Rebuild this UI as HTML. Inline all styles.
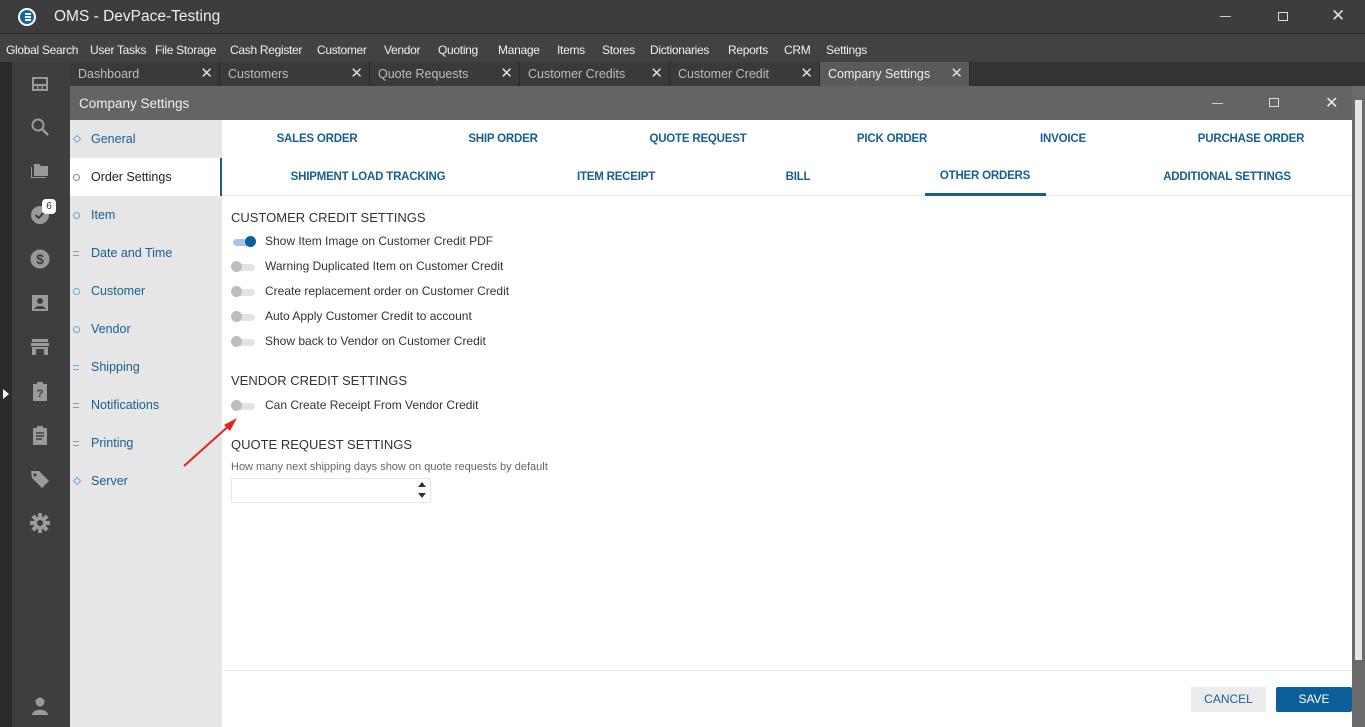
<!DOCTYPE html>
<html><head><style>
*{margin:0;padding:0;box-sizing:border-box}
body{width:1365px;height:727px;overflow:hidden;font-family:"Liberation Sans",sans-serif;background:#fff;position:relative}
.a{position:absolute}
.t{color:#fff;font-size:16px}
.menu span{position:absolute}
.tab{position:absolute;top:62px;height:24px;width:150px;background:#3a3a3a;border-right:1px solid #2a2a2a;color:#bdbdbd;font-size:12.5px;line-height:24px;padding-left:8px}
.tab .x{position:absolute;right:6px;top:0;color:#ddd;font-size:15px}
.nav{position:absolute;left:70px;width:152px;height:38px;font-size:12.5px;color:#175f92;line-height:38px;padding-left:21px}
.nav i{position:absolute;left:3px;top:16px;width:7px;height:7px;border:1.3px solid #6ea6cc;border-radius:50%}
.nav i.d{border-radius:1px;transform:rotate(45deg);width:6px;height:6px;left:4px;top:16px}
.nav i.e{border:none;border-top:1.5px solid #6ea6cc;border-bottom:1.5px solid #6ea6cc;border-radius:0;height:5px;width:6px;top:17px}
.ot{position:absolute;font-size:11.5px;letter-spacing:-0.2px;font-weight:bold;color:#175f92;transform:translateX(-50%);white-space:nowrap}
.h{position:absolute;left:231px;font-size:13px;color:#333}
.row{position:absolute;left:231px;font-size:12px;color:#333}
.tg{display:inline-block;position:relative;width:24px;height:14px;vertical-align:middle;margin-right:10px}
.tg:before{content:"";position:absolute;left:2px;top:4px;width:22px;height:7px;border-radius:4px;background:#e3e3e3}
.tg:after{content:"";position:absolute;left:0;top:1px;width:11px;height:11px;border-radius:50%;background:#bdbdbd}
.tg.on:before{background:#a9c4ec}.tg.on:after{left:14px;background:#0b5f9a}
.ic{position:absolute;left:30px;width:20px;height:20px;fill:#9a9a9a}
</style></head><body>
<div class="a" style="left:0;top:0;width:1365px;height:34px;background:#3d3d3d;border-bottom:1px solid #2f2f2f"></div>
<div class="a" style="left:18px;top:8px;width:18px;height:18px;border-radius:50%;background:#1467a8;border:2px solid #fff"><div style="position:absolute;left:5px;top:3px;width:6px;height:1.5px;background:#fff;box-shadow:0 3px 0 #fff,0 6px 0 #fff"></div></div>
<div class="a t" style="left:54px;top:8px;font-size:15.5px;color:#eee">OMS - DevPace-Testing</div>
<div class="a" style="left:1220px;top:16px;width:11px;height:1px;background:#ccc"></div>
<div class="a" style="left:1278px;top:12px;width:10px;height:9px;border:1.3px solid #ddd"></div>
<div class="a" style="left:1331px;top:6px;color:#ddd;font-size:17px">✕</div>
<div class="a menu" style="left:0;top:34px;width:1365px;height:28px;background:#424242;color:#f0f0f0;font-size:12px;letter-spacing:-0.3px;line-height:32px">
<span style="left:6px">Global Search</span><span style="left:90px">User Tasks</span><span style="left:155px">File Storage</span><span style="left:230px">Cash Register</span><span style="left:317px">Customer</span><span style="left:384px">Vendor</span><span style="left:438px">Quoting</span><span style="left:498px">Manage</span><span style="left:557px">Items</span><span style="left:602px">Stores</span><span style="left:650px">Dictionaries</span><span style="left:728px">Reports</span><span style="left:784px">CRM</span><span style="left:826px">Settings</span></div>
<div class="a" style="left:0;top:62px;width:1365px;height:24px;background:#333"></div>
<div class="a" style="left:0;top:62px;width:12px;height:665px;background:#2b2b2b"></div>
<div class="a" style="left:3px;top:389px;width:0;height:0;border-top:5px solid transparent;border-bottom:5px solid transparent;border-left:6px solid #fff"></div>
<div class="a" style="left:12px;top:62px;width:58px;height:665px;background:#3e3e3e"></div>
<div class="tab" style="left:70px">Dashboard<span class="x">✕</span></div>
<div class="tab" style="left:220px">Customers<span class="x">✕</span></div>
<div class="tab" style="left:370px">Quote Requests<span class="x">✕</span></div>
<div class="tab" style="left:520px">Customer Credits<span class="x">✕</span></div>
<div class="tab" style="left:670px">Customer Credit<span class="x">✕</span></div>
<div class="tab" style="left:820px;background:#5a5a5a;color:#eee">Company Settings<span class="x">✕</span></div>
<div class="a" style="left:70px;top:86px;width:1295px;height:34px;background:#646464"></div>
<div class="a" style="left:79px;top:96px;color:#f0f0f0;font-size:13.5px">Company Settings</div>
<div class="a" style="left:1212px;top:103px;width:11px;height:1px;background:#ccc"></div>
<div class="a" style="left:1269px;top:98px;width:10px;height:9px;border:1.3px solid #ddd"></div>
<div class="a" style="left:1325px;top:93px;color:#eee;font-size:16px">✕</div>
<div class="a" style="left:1352px;top:86px;width:13px;height:641px;background:#6a6a6a"></div>
<div class="a" style="left:1355px;top:100px;width:7px;height:560px;background:#e6e6e6"></div>
<svg class="ic" style="top:74px" viewBox="0 0 20 20"><path d="M2 3h16v14H2zM4 5v5h12V5zM4 12v3h3v-3zM8.5 12v3h3v-3zM13 12v3h3v-3z" fill-rule="evenodd"/></svg>
<svg class="ic" style="top:117px" viewBox="0 0 20 20"><circle cx="8" cy="8" r="5.5" fill="none" stroke="#9a9a9a" stroke-width="2"/><path d="M12 12l6 6" stroke="#9a9a9a" stroke-width="2.4"/></svg>
<svg class="ic" style="top:161px" viewBox="0 0 20 20"><path d="M1 6v11h15v-1H2V6z M4 3h5l2 2h7v10H4z"/></svg>
<svg class="ic" style="top:205px" viewBox="0 0 20 20"><circle cx="10" cy="10" r="9"/><path d="M5.5 10l3 3 6-6" stroke="#3e3e3e" stroke-width="2" fill="none"/></svg>
<div class="a" style="left:42px;top:199px;width:14px;height:15px;border-radius:4px;background:#fff;font-size:10px;text-align:center;line-height:15px;color:#333">6</div>
<svg class="ic" style="top:249px" viewBox="0 0 20 20"><circle cx="10" cy="10" r="9.5"/><text x="10" y="15" font-size="14" font-weight="bold" text-anchor="middle" fill="#3e3e3e" font-family="Liberation Sans">$</text></svg>
<svg class="ic" style="top:293px" viewBox="0 0 20 20"><path d="M2 2h16v16H2z"/><circle cx="10" cy="8" r="3" fill="#3e3e3e"/><path d="M4.5 16c0-4 11-4 11 0z" fill="#3e3e3e"/></svg>
<svg class="ic" style="top:337px" viewBox="0 0 20 20"><path d="M2 2h16v3H2zM1 6h18v3H1zM2 10h16v8H2z"/><path d="M6 12h8v6H6z" fill="#3e3e3e"/></svg>
<svg class="ic" style="top:381px" viewBox="0 0 20 20"><path d="M3 3h4V1h6v2h4v17H3z"/><text x="10" y="16" font-size="11" font-weight="bold" text-anchor="middle" fill="#3e3e3e" font-family="Liberation Sans">?</text></svg>
<svg class="ic" style="top:425px" viewBox="0 0 20 20"><path d="M3 3h4V1h6v2h4v17H3z"/><path d="M6 8h8M6 11h8M6 14h6" stroke="#3e3e3e" stroke-width="1.5"/></svg>
<svg class="ic" style="top:469px" viewBox="0 0 20 20"><path d="M1 2h8l10 10-7 7L2 9z"/><circle cx="5" cy="6" r="1.5" fill="#3e3e3e"/></svg>
<svg class="ic" style="top:513px" viewBox="0 0 20 20"><circle cx="10" cy="10" r="6.5"/><path d="M8 0h4v20H8zM0 8h20v4H0z"/><path d="M8 0h4v20H8zM0 8h20v4H0z" transform="rotate(45 10 10)"/><circle cx="10" cy="10" r="3" fill="#3e3e3e"/></svg>
<svg class="ic" style="top:696px" viewBox="0 0 20 20"><circle cx="10" cy="6" r="4.5"/><path d="M2 19c0-7 16-7 16 0z"/></svg>
<div class="a" style="left:70px;top:120px;width:152px;height:607px;background:#e6e6e6"></div>
<div class="nav" style="top:120px"><i class="d"></i>General</div>
<div class="nav" style="top:158px;background:#fff;color:#222;border-right:2px solid #175f92"><i style="border-color:#888"></i>Order Settings</div>
<div class="nav" style="top:196px"><i></i>Item</div>
<div class="nav" style="top:234px"><i class="e"></i>Date and Time</div>
<div class="nav" style="top:272px"><i></i>Customer</div>
<div class="nav" style="top:310px"><i></i>Vendor</div>
<div class="nav" style="top:348px"><i class="e"></i>Shipping</div>
<div class="nav" style="top:386px"><i class="e"></i>Notifications</div>
<div class="nav" style="top:424px"><i class="e"></i>Printing</div>
<div class="nav" style="top:462px"><i class="d"></i>Server</div>
<div class="ot" style="left:317px;top:133px">SALES ORDER</div>
<div class="ot" style="left:503px;top:133px">SHIP ORDER</div>
<div class="ot" style="left:698px;top:133px">QUOTE REQUEST</div>
<div class="ot" style="left:892px;top:133px">PICK ORDER</div>
<div class="ot" style="left:1063px;top:133px">INVOICE</div>
<div class="ot" style="left:1251px;top:133px">PURCHASE ORDER</div>
<div class="ot" style="left:368px;top:171px">SHIPMENT LOAD TRACKING</div>
<div class="ot" style="left:616px;top:171px">ITEM RECEIPT</div>
<div class="ot" style="left:798px;top:171px">BILL</div>
<div class="ot" style="left:985px;top:170px">OTHER ORDERS</div>
<div class="ot" style="left:1227px;top:171px">ADDITIONAL SETTINGS</div>
<div class="a" style="left:222px;top:195px;width:1130px;height:1px;background:#e8e8e8"></div>
<div class="a" style="left:925px;top:193px;width:121px;height:3px;background:#175f92"></div>
<div class="h" style="top:210px">CUSTOMER CREDIT SETTINGS</div>
<div class="row" style="top:234px"><span class="tg on"></span>Show Item Image on Customer Credit PDF</div>
<div class="row" style="top:259px"><span class="tg"></span>Warning Duplicated Item on Customer Credit</div>
<div class="row" style="top:284px"><span class="tg"></span>Create replacement order on Customer Credit</div>
<div class="row" style="top:309px"><span class="tg"></span>Auto Apply Customer Credit to account</div>
<div class="row" style="top:334px"><span class="tg"></span>Show back to Vendor on Customer Credit</div>
<div class="h" style="top:373px">VENDOR CREDIT SETTINGS</div>
<div class="row" style="top:398px"><span class="tg"></span>Can Create Receipt From Vendor Credit</div>
<div class="h" style="top:437px">QUOTE REQUEST SETTINGS</div>
<div class="a" style="left:231px;top:461px;font-size:11px;color:#666">How many next shipping days show on quote requests by default</div>
<div class="a" style="left:231px;top:478px;width:200px;height:25px;border:1px solid #e6e6e6;border-radius:2px"></div>
<div class="a" style="left:418px;top:482px;border-left:4px solid transparent;border-right:4px solid transparent;border-bottom:5px solid #333"></div>
<div class="a" style="left:418px;top:493px;border-left:4px solid transparent;border-right:4px solid transparent;border-top:5px solid #333"></div>
<svg class="a" style="left:180px;top:415px" width="60" height="55"><path d="M4 51L52 8" stroke="#e8211c" stroke-width="2"/><path d="M57 3L44 10l6 6z" fill="#e8211c"/></svg>
<div class="a" style="left:222px;top:670px;width:1130px;height:1px;background:#e8e8e8"></div>
<div class="a" style="left:1191px;top:687px;width:75px;height:25px;background:#ececec;color:#175f92;font-size:12px;text-align:center;line-height:25px">CANCEL</div>
<div class="a" style="left:1276px;top:687px;width:76px;height:25px;background:#0b5f9a;color:#fff;font-size:12px;text-align:center;line-height:25px;border-radius:2px">SAVE</div>
</body></html>
